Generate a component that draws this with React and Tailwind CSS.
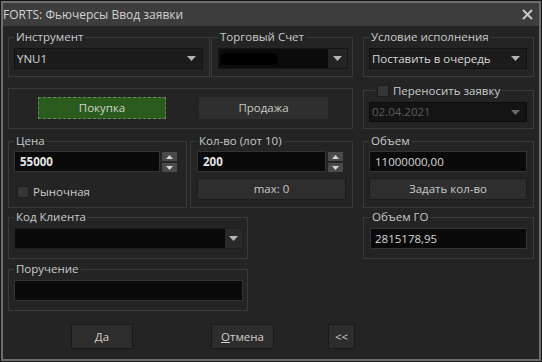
import React from 'react';

const Arrow = ({ color = '#b4b4b4' }) => (
  <svg width="9" height="5" viewBox="0 0 9 5">
    <path d="M0 0h9L4.5 5z" fill={color} />
  </svg>
);

const Group = ({ label, className = '', children }) => (
  <fieldset className={`min-w-0 border border-[#393b3a] ${className}`}>
    {label && (
      <legend className="px-[2px] h-[14px] leading-[14px] text-[#c9cbcc]">{label}</legend>
    )}
    {children}
  </fieldset>
);

const Spinner = () => (
  <div className="ml-[2px] mt-[1px] flex flex-col gap-[2px]">
    <div className="w-[15px] h-[9px] bg-[#4a4a4a] flex items-center justify-center">
      <svg width="7" height="4" viewBox="0 0 7 4"><path d="M0 4h7L3.5 0z" fill="#d4d4d4" /></svg>
    </div>
    <div className="w-[15px] h-[9px] bg-[#4a4a4a] flex items-center justify-center">
      <svg width="7" height="4" viewBox="0 0 7 4"><path d="M0 0h7L3.5 4z" fill="#d4d4d4" /></svg>
    </div>
  </div>
);

const Checkbox = () => (
  <div className="w-[12px] h-[12px] bg-[#363636] border border-[#1c1c1c]" />
);

export default function App() {
  return (
    <div className="w-[542px] h-[362px] bg-[#161616] p-px font-['Open_Sans',sans-serif] text-[11.5px]">
      <div className="h-full border-2 border-[#6e6e6e] bg-[#232423] flex flex-col">
        {/* title bar */}
        <div className="h-[23px] shrink-0 bg-[#3d3d3d] flex items-center justify-between pr-[6px] text-[12px] text-[#d2d2d2]">
          <span>FORTS: Фьючерсы Ввод заявки</span>
          <svg width="11" height="11" viewBox="0 0 11 11">
            <path d="M1 1l9 9M10 1l-9 9" stroke="#c8c8c8" strokeWidth="2" />
          </svg>
        </div>

        <div className="flex flex-col pl-[5px]">
          {/* row 1 */}
          <div className="mt-[4px] flex">
            <Group label="Инструмент" className="w-[202px] pl-[5px] pr-[6px] pt-[4px] pb-[7px]">
              <div className="h-[21px] bg-[#1c1c1c] border border-[#121212] flex items-center justify-between pl-[2px] pr-[6px] text-[#d8d8d8]">
                <span>YNU1</span>
                <Arrow />
              </div>
            </Group>
            <Group label="Торговый Счет" className="ml-[1px] w-[142px] pl-[6px] pr-[4px] pt-[4px] pb-[7px]">
              <div className="h-[21px] bg-[#0b0b0b] border border-[#151515] flex">
                <div className="flex-1 flex items-center pl-[1px]">
                  <div className="w-[58px] h-[12px] rounded-full bg-black" />
                </div>
                <div className="w-[19px] bg-[#242424] flex items-center justify-center">
                  <Arrow />
                </div>
              </div>
            </Group>
            <Group label="Условие исполнения" className="ml-[10px] w-[171px] pl-[5px] pr-[6px] pt-[4px] pb-[7px]">
              <div className="h-[21px] bg-[#1c1c1c] border border-[#121212] flex items-center justify-between pl-[2px] pr-[6px] text-[#d8d8d8]">
                <span>Поставить в очередь</span>
                <Arrow />
              </div>
            </Group>
          </div>

          {/* row 2 */}
          <div className="flex items-start">
            <fieldset className="mt-[11px] w-[345px] h-[41px] border border-[#393b3a]">
              <div className="flex pl-[29px] pt-[8px]">
                <div className="w-[128px] h-[22px] bg-[#2b5a1e] border border-dashed border-[#67875c] flex items-center justify-center text-[#cdd5ca]">
                  Покупка
                </div>
                <div className="ml-[33px] w-[129px] h-[22px] bg-[#2f2f2f] flex items-center justify-center text-[#c8c8c8]">
                  Продажа
                </div>
              </div>
            </fieldset>
            <fieldset className="ml-[10px] mt-[7px] w-[171px] min-w-0 border border-[#393b3a] pl-[5px] pr-[6px] pt-[5px] pb-[6px]">
              <legend className="ml-[6px] px-[2px] h-[13px] flex items-center gap-[4px] text-[#c9cbcc]">
                <Checkbox />
                <span className="leading-[13px]">Переносить заявку</span>
              </legend>
              <div className="h-[20px] bg-[#141414] border border-[#0c0c0c] flex items-center justify-between pl-[2px] pr-[6px] text-[#5c5c5c]">
                <span>02.04.2021</span>
                <Arrow color="#6a6a6a" />
              </div>
            </fieldset>
          </div>

          {/* row 3 */}
          <div className="mt-[5px] flex">
            <Group label="Цена" className="w-[179px] pl-[5px] pt-[3px]">
              <div className="flex">
                <div className="w-[146px] h-[21px] bg-[#0a0a0a] border border-[#333] flex items-center pl-[5px] font-bold text-[#e4e4e4]">
                  55000
                </div>
                <Spinner />
              </div>
              <div className="mt-[14px] ml-[3px] flex items-center gap-[4px] text-[#c9cbcc]">
                <Checkbox />
                <span className="leading-[12px]">Рыночная</span>
              </div>
            </Group>
            <Group label="Кол-во (лот 10)" className="ml-[3px] w-[163px] pl-[6px] pt-[3px] pb-[7px]">
              <div className="flex">
                <div className="w-[129px] h-[21px] bg-[#0a0a0a] border border-[#333] flex items-center pl-[5px] font-bold text-[#e4e4e4]">
                  200
                </div>
                <Spinner />
              </div>
              <div className="mt-[6px] w-[149px] h-[22px] bg-[#2e2e2e] border border-[#1c1c1c] flex items-center justify-center text-[#c8c8c8]">
                max: 0
              </div>
            </Group>
            <Group label="Объем" className="ml-[10px] w-[171px] pl-[5px] pr-[6px] pt-[3px] pb-[7px]">
              <div className="h-[21px] bg-[#0a0a0a] border border-[#333] flex items-center pl-[5px] text-[#d8d8d8]">
                11000000,00
              </div>
              <div className="mt-[6px] h-[22px] bg-[#2e2e2e] border border-[#1c1c1c] flex items-center justify-center text-[#c8c8c8]">
                Задать кол-во
              </div>
            </Group>
          </div>

          {/* row 4 */}
          <div className="mt-[2px] flex">
            <Group label="Код Клиента" className="w-[240px] pl-[5px] pr-[4px] pt-[4px] pb-[9px]">
              <div className="h-[21px] bg-[#0a0a0a] border border-[#1e1e1e] flex">
                <div className="flex-1" />
                <div className="w-[17px] bg-[#2a2a2a] flex items-center justify-center">
                  <Arrow />
                </div>
              </div>
            </Group>
            <Group label="Объем ГО" className="ml-[115px] w-[171px] pl-[6px] pr-[6px] pt-[4px] pb-[9px]">
              <div className="h-[21px] bg-[#0a0a0a] border border-[#333] flex items-center pl-[4px] text-[#d8d8d8]">
                2815178,95
              </div>
            </Group>
          </div>

          {/* row 5 */}
          <div className="mt-[3px] flex">
            <Group label="Поручение" className="w-[240px] pl-[5px] pr-[4px] pt-[4px] pb-[9px]">
              <div className="h-[21px] bg-[#0a0a0a] border border-[#333]" />
            </Group>
          </div>

          {/* buttons */}
          <div className="mt-[13px] flex text-[#d0d0d0]">
            <div className="ml-[63px] w-[62px] h-[25px] bg-[#2d2d2d] border border-[#1a1a1a] flex items-center justify-center">
              <span><u>Д</u>а</span>
            </div>
            <div className="ml-[78px] w-[63px] h-[25px] bg-[#2d2d2d] border border-[#1a1a1a] flex items-center justify-center">
              <span><u>О</u>тмена</span>
            </div>
            <div className="ml-[54px] w-[27px] h-[25px] bg-[#2d2d2d] border border-[#1a1a1a] flex items-center justify-center">
              &lt;&lt;
            </div>
          </div>
        </div>
      </div>
    </div>
  );
}
